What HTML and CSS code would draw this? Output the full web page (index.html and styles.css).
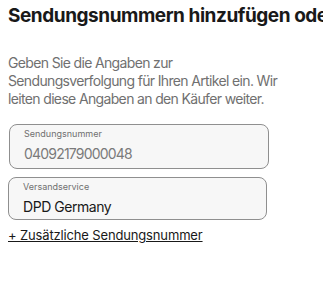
FILE: index.html
```html
<!DOCTYPE html>
<html lang="de">
  <head>
    <meta charset="UTF-8" />
    <meta name="viewport" content="width=device-width, initial-scale=1.0" />
    <title>Sendungsnummern</title>
    <link rel="stylesheet" href="styles.css">
  </head>
  <body>
    <div class="panel">
      <h1>Sendungsnummern hinzufügen oder bearbeiten</h1>
      <p class="intro">
        Geben Sie die Angaben zur<br>
        Sendungsverfolgung für Ihren Artikel ein. Wir<br>
        leiten diese Angaben an den Käufer weiter.
      </p>

      <div class="field field-number">
        <span class="field-label">Sendungsnummer</span>
        <span class="field-value muted">04092179000048</span>
      </div>
      <div class="field field-service">
        <span class="field-label">Versandservice</span>
        <span class="field-value">DPD Germany</span>
      </div>

      <a href="#" class="add-link">+ Zusätzliche Sendungsnummer</a>
    </div>
  </body>
</html>
```

FILE: styles.css
```css
body {
  margin: 0;
  padding: 0;
  background: #fff;
  color: #191919;
  font-family: Inter, "Open Sans", sans-serif;
}

.panel {
  padding: 4px 8px;
  overflow: hidden;
}

h1 {
  margin: 0;
  font-size: 19px;
  font-weight: 700;
  line-height: 24px;
  white-space: nowrap;
  letter-spacing: -0.45px;
}

.intro {
  margin: 26px 0 0;
  font-size: 14px;
  line-height: 18px;
  letter-spacing: -0.65px;
  color: #707070;
  white-space: nowrap;
}

.field {
  display: flex;
  flex-direction: column;
  gap: 3px;
  box-sizing: border-box;
  margin-top: 8px;
  padding: 2px 14px 0;
  background: #f7f7f7;
  border: 1px solid #8f8f8f;
  border-radius: 8px;
}
.field-number {
  width: 260px;
  height: 45px;
  margin-left: 1px;
  margin-top: 16px;
}
.field-service {
  width: 259px;
  height: 43px;
}
.field-label {
  font-size: 9px;
  line-height: 13px;
  color: #707070;
}
.field-value {
  font-size: 14px;
  line-height: 22px;
  letter-spacing: -0.45px;
  color: #191919;
}
.field-value.muted {
  color: #7a7a7a;
  letter-spacing: -0.8px;
}

.add-link {
  display: inline-block;
  margin-top: 7px;
  font-size: 13px;
  letter-spacing: -0.15px;
  color: #191919;
  text-decoration: underline;
}
```
